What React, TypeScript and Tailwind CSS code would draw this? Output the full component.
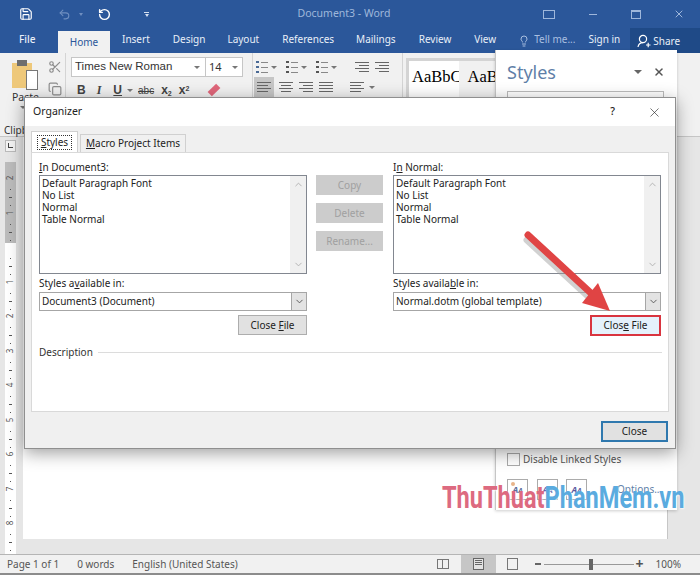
import { ChevronDown, ChevronUp, Copy, Lightbulb, RotateCcw, Save, Scissors, Undo2, X } from "lucide-react";

const tabs = [
  { label: "Insert", cls: "ml-[12px]" },
  { label: "Design", cls: "ml-[23px]" },
  { label: "Layout", cls: "ml-[22px]" },
  { label: "References", cls: "ml-[23px]" },
  { label: "Mailings", cls: "ml-[22px]" },
  { label: "Review", cls: "ml-[23px]" },
  { label: "View", cls: "ml-[23px]" },
];

const styleNames = ["Default Paragraph Font", "No List", "Normal", "Table Normal"];

const Caret = () => <span className="inline-block w-0 h-0 border-x-[3px] border-x-transparent border-t-[3px] border-t-[#777]" />;

const Lines = ({ align = "left" }: { align?: "left" | "center" | "right" | "full" }) => {
  const widths = align === "full" ? ["w-full", "w-full", "w-full", "w-full"] : ["w-full", "w-3/4", "w-full", "w-3/4"];
  const items = align === "left" ? "items-start" : align === "right" ? "items-end" : "items-center";
  return (
    <div className={`flex flex-col gap-[2px] w-[14px] ${items}`}>
      {widths.map((w, i) => (
        <div key={i} className={`${w} h-px bg-[#666]`} />
      ))}
    </div>
  );
};

const ListIcon = ({ kind }: { kind: string }) => (
  <div className="flex items-center gap-[3px]">
    <div className="flex flex-col gap-[3px] w-[12px]">
      {[0, 1, 2].map((i) => (
        <div key={i} className="flex items-center gap-[2px]">
          <span className={`w-[3px] h-[2px] ${kind === "bullet" ? "bg-[#4a6a95]" : "bg-[#555]"}`} />
          <span className="flex-1 h-px bg-[#888]" />
        </div>
      ))}
    </div>
    <Caret />
  </div>
);

const Ruler = () => {
  const marks: string[] = ["2", "1", "", "1", "2", "3", "4", "5", "6", "7", "8"];
  return (
    <div className="w-[11px] flex flex-col">
      <div className="h-[3px]" />
      <div className="h-[12px] bg-[#f4f4f4] border border-[#bbb] flex items-center justify-center">
        <span className="w-[5px] h-[5px] border-l border-b border-[#444]" />
      </div>
      <div className="h-[10px]" />
      <div className="h-[12px] bg-[#bcbcbc]" />
      {marks.map((m, i) => (
        <div key={i} className={`h-[34.6px] flex flex-col items-center text-[8px] leading-none text-[#555] ${i < 2 ? "bg-[#bcbcbc]" : "bg-white"}`}>
          <span className="h-[8px] flex items-center -rotate-90">{m}</span>
          <span className="mt-[7px] w-px h-px bg-[#555]" />
          <span className="mt-[7px] w-[3px] h-px bg-[#555]" />
          <span className="mt-[7px] w-px h-px bg-[#555]" />
        </div>
      ))}
    </div>
  );
};

const ScrollBar = () => (
  <div className="w-[16px] bg-[#f0f0f0] flex flex-col justify-between items-center py-[3px] text-[#b0b0b0]">
    <ChevronUp size={11} />
    <ChevronDown size={11} />
  </div>
);

const ListBox = () => (
  <div className="h-[99px] border border-[#828790] bg-white flex">
    <div className="flex-1 pl-[2px] pt-px">
      {styleNames.map((s) => (
        <div key={s} className="h-[12px] leading-[12px]">{s}</div>
      ))}
    </div>
    <ScrollBar />
  </div>
);

const Combo = ({ value }: { value: string }) => (
  <div className="h-[19px] border border-[#a6a6a6] bg-white flex items-center">
    <span className="flex-1 pl-[2px]">{value}</span>
    <span className="w-[15px] h-full bg-[#e3e3e3] border-l border-[#a6a6a6] flex items-center justify-center text-[#555]">
      <ChevronDown size={11} />
    </span>
  </div>
);

const DisabledButton = ({ label }: { label: string }) => (
  <div className="h-[20px] bg-[#cccccc] text-[#a0a0a0] flex items-center justify-center">{label}</div>
);

const Arrow = () => (
  <svg className="absolute left-[515px] top-[225px]" width="110" height="100" viewBox="0 0 110 100">
    <path d="M14 11 L76 68" stroke="#9a9a9a" strokeOpacity="0.45" strokeWidth="7" strokeLinecap="round" transform="translate(-2 4)" />
    <path d="M13 10 L78 70" stroke="#e04444" strokeWidth="7" strokeLinecap="round" />
    <polygon points="83,58 95,86 67,78" fill="#e04444" />
  </svg>
);

const StyleOptIcon = ({ color, dot }: { color: string; dot?: boolean }) => (
  <div className="relative w-[21px] h-[21px] border border-[#ababab] bg-white flex items-center justify-center text-[9px] italic font-bold" style={{ color }}>
    {dot && <span className="absolute left-[3px] top-[2px] w-[4px] h-[4px] rounded-full bg-[#e8b48a]" />}
    <span>A<span className="text-[7px]">A</span></span>
  </div>
);

export default function App() {
  return (
    <div className="relative w-[700px] h-[575px] overflow-hidden flex flex-col bg-[#e6e6e6] font-['Noto_Sans',sans-serif] text-[10px] text-[#222]">
      {/* Title bar */}
      <div className="h-[28px] bg-[#2b579a] flex items-center text-[#d5e0f0]">
        <Save size={14} className="ml-[19px] text-white" />
        <Undo2 size={13} className="ml-[25px] text-[#6f8fc0]" />
        <span className="ml-[8px] w-0 h-0 border-x-[2px] border-x-transparent border-t-[3px] border-t-[#6f8fc0]" />
        <RotateCcw size={13} strokeWidth={2.6} className="ml-[15px] text-white" />
        <span className="ml-[33px] w-[5px] h-[5px] border-t border-t-[#d5e0f0] flex justify-center pt-px">
          <span className="w-0 h-0 border-x-[2px] border-x-transparent border-t-[3px] border-t-[#d5e0f0]" />
        </span>
        <div className="flex-1 text-center text-[#9fb7db] text-[10.5px] pr-[4px]">Document3 - Word</div>
        <div className="w-[12px] h-[9px] border border-[#9fb7db] mr-[34px]" />
        <div className="w-[8px] h-px bg-[#9fb7db] mr-[34px]" />
        <div className="w-[10px] h-[9px] border border-[#9fb7db] border-t-2 mr-[32px]" />
        <X size={12} className="text-[#9fb7db] mr-[15px]" />
      </div>

      {/* Tabs */}
      <div className="h-[25px] bg-[#2b579a] flex items-end text-[#e9eff8] leading-[23px] whitespace-nowrap">
        <span className="ml-[19px] w-[39px] h-[25px] font-medium">File</span>
        <span className="w-[52px] h-[22px] bg-[#f1f1f1] text-[#2b579a] text-center leading-[22px]">Home</span>
        {tabs.map((t) => (
          <span key={t.label} className={`${t.cls} h-[25px]`}>{t.label}</span>
        ))}
        <Lightbulb size={12} className="ml-[22px] mb-[6px] text-[#a9bfe0]" />
        <span className="ml-[4px] h-[25px] text-[#a9bfe0]">Tell me...</span>
        <span className="ml-[13px] h-[25px]">Sign in</span>
        <span className="ml-[10px] flex-1 h-[25px] bg-[#1f4a87] flex items-center pl-[7px] gap-[2px] leading-none">
          <svg width="14" height="14" viewBox="0 0 14 14" fill="none" stroke="#fff" strokeWidth="1.2">
            <circle cx="6" cy="5" r="3.6" />
            <path d="M1 13c.5-3 2.5-4.4 5-4.4M9 11h4.5M11.2 8.8v4.4" />
          </svg>
          <span>Share</span>
        </span>
      </div>

      {/* Ribbon */}
      <div className="h-[84px] bg-[#f1f1f1] border-b border-[#c6c6c6] flex text-[#333]">
        <div className="w-[66px] relative flex border-r border-[#d4d4d4] pl-[12px] pt-[7px]">
          <div className="flex flex-col items-start">
            <div className="relative w-[26px] h-[30px]">
              <div className="absolute left-0 top-[3px] w-[20px] h-[25px] bg-[#eec87a]" />
              <div className="absolute left-[5px] top-0 w-[10px] h-[6px] bg-[#6e6e6e]" />
              <div className="absolute left-[14px] top-[10px] w-[12px] h-[20px] bg-white border border-[#777]" />
            </div>
            <span className="mt-[1px] text-[10.5px] leading-[12px]">Paste</span>
            <span className="mt-[3px] ml-[8px] flex"><Caret /></span>
          </div>
          <div className="ml-[9px] flex flex-col gap-[8px] text-[#8c8c8c]">
            <Scissors size={14} />
            <Copy size={14} />
          </div>
          <span className="absolute left-[4px] top-[72px] leading-none">Clipboard</span>
        </div>

        <div className="w-[187px] pl-[5px] pt-[4px] border-r border-[#d4d4d4]">
          <div className="h-[20px] w-[172px] flex border border-[#c6c6c6] bg-white items-center">
            <span className="font-['Liberation_Sans',sans-serif] text-[11.5px] pl-[3px] flex-1">Times New Roman</span>
            <Caret />
            <span className="w-px h-full bg-[#c6c6c6] ml-[5px]" />
            <span className="w-[36px] pl-[3px] flex items-center justify-between pr-[4px] text-[11px]"><span>14</span><Caret /></span>
          </div>
          <div className="mt-[3px] flex items-center font-['Liberation_Sans',sans-serif] text-[12px] text-[#444] h-[20px] pl-[6px]">
            <span className="font-bold">B</span>
            <span className="ml-[11px] italic font-bold font-['Liberation_Serif',serif]">I</span>
            <span className="ml-[12px] underline font-bold">U</span>
            <span className="ml-[5px] flex"><Caret /></span>
            <span className="ml-[5px] text-[10px] line-through">abc</span>
            <span className="ml-[7px] font-bold">x<sub className="text-[7px]">2</sub></span>
            <span className="ml-[7px] font-bold">x<sup className="text-[7px]">2</sup></span>
            <span className="ml-[19px] w-[12px] h-[6px] bg-[#e0667a] -rotate-45" />
          </div>
        </div>

        <div className="w-[150px] pl-[2px] pt-[5px] border-r border-[#d4d4d4]">
          <div className="flex gap-[9px] items-center h-[18px] pl-[1px]">
            <ListIcon kind="bullet" />
            <ListIcon kind="number" />
            <ListIcon kind="multi" />
            <div className="ml-[9px] flex gap-[6px]">
              <Lines align="right" />
              <Lines align="right" />
            </div>
          </div>
          <div className="mt-[1px] flex items-center h-[20px] -ml-[1px]">
            <div className="w-[20px] h-[20px] bg-[#c6c6c6] flex items-center justify-center"><Lines /></div>
            <div className="w-[20px] ml-[2px] flex justify-center"><Lines align="center" /></div>
            <div className="w-[20px] flex justify-center"><Lines align="right" /></div>
            <div className="w-[20px] flex justify-center"><Lines align="full" /></div>
            <div className="ml-[14px] flex items-center gap-[5px]"><Lines /><Caret /></div>
          </div>
        </div>

        <div className="flex-1 pl-[3px] pt-[5px]">
          <div className="w-[100px] h-[42px] border-y-[3px] border-l-[3px] border-[#d4d4d4] flex overflow-hidden font-['Liberation_Serif',serif] text-[16.5px] leading-[20px] whitespace-nowrap text-black">
            <div className="w-[60px] bg-white overflow-hidden pl-[3px] pt-[6px]">AaBbCc</div>
            <div className="flex-1 pl-[9px] pt-[6px]">AaBb</div>
          </div>
        </div>
      </div>

      {/* Document area */}
      <div className="flex-1 flex min-h-0">
        <div className="w-[5px]" />
        <Ruler />
        <div className="w-[7px]" />
        <div className="w-[645px] bg-white mb-[15px] border-r border-[#c6c6c6]" />
        <div className="flex-1" />
      </div>

      {/* Status bar */}
      <div className="h-[21px] bg-[#f1f1f1] border-t border-[#b5b5b5] border-b-2 border-b-[#8c8c8c] flex items-center text-[#555]">
        <span className="ml-[7px]">Page 1 of 1</span>
        <span className="ml-[18px]">0 words</span>
        <span className="ml-[18px]">English (United States)</span>
        <div className="flex-1" />
        <div className="w-[12px] h-[10px] border border-[#777] flex">
          <div className="flex-1 border-r border-[#777]" />
          <div className="flex-1" />
        </div>
        <div className="ml-[12px] w-[35px] h-full bg-[#c6c6c6] flex items-center justify-center">
          <div className="w-[11px] h-[12px] border border-[#666] bg-[#e3e3e3] flex flex-col gap-px p-px">
            <div className="h-px bg-[#666]" />
            <div className="h-px bg-[#666]" />
            <div className="h-px bg-[#666]" />
          </div>
        </div>
        <div className="ml-[11px] w-[11px] h-[12px] border border-[#777]" />
        <span className="ml-[17px] w-[6px] h-[2px] bg-[#666]" />
        <div className="ml-[3px] w-[90px] h-px bg-[#999] relative">
          <span className="absolute left-[45px] -top-[5px] w-[4px] h-[11px] bg-[#666]" />
        </div>
        <span className="ml-[2px] text-[14px] leading-none font-bold">+</span>
        <span className="ml-[12px] mr-[19px]">100%</span>
      </div>

      {/* Styles pane */}
      <div className="absolute left-[495px] top-[50px] w-[182px] h-[460px] bg-white border-l border-[#c6c6c6] shadow-[0_1px_3px_rgba(0,0,0,0.2)] pl-[11px] pr-[12px]">
        <div className="flex items-center h-[41px] pt-[3px]">
          <span className="text-[18px] text-[#5f7fa8] flex-1">Styles</span>
          <span className="w-0 h-0 border-x-[4px] border-x-transparent border-t-[4px] border-t-[#666] mr-[11px]" />
          <X size={12} className="text-[#555] stroke-[3]" />
        </div>
        <div className="w-[157px] h-[350px] border border-[#bbb]" />
        <div className="mt-[11px] flex items-center gap-[3px] text-[#555]">
          <span className="w-[13px] h-[13px] border border-[#aaa]" />
          <span>Disable Linked Styles</span>
        </div>
        <div className="mt-[12px] flex items-center">
          <StyleOptIcon color="#5a6c9a" dot />
          <span className="ml-[9px]" />
          <StyleOptIcon color="#5a5aa0" />
          <span className="ml-[8px]" />
          <StyleOptIcon color="#5a5aa0" />
          <span className="ml-[30px] text-[#5f7fa8]">Options...</span>
        </div>
      </div>

      {/* Organizer dialog */}
      <div className="absolute left-[24px] top-[97px] w-[652px] h-[352px] flex flex-col bg-[#f0f0f0] border border-[#8f8f8f] shadow-[0_4px_16px_rgba(0,0,0,0.38)]">
        <div className="h-[28px] bg-white flex items-center pl-[8px] text-[10.5px] text-[#222]">
          <span className="flex-1">Organizer</span>
          <span className="mr-[32px] font-medium">?</span>
          <X size={15} strokeWidth={1} className="mr-[13px]" />
        </div>
        <div className="flex items-end h-[26px] pl-[6px]">
          <div className="w-[47px] h-[21px] bg-white border border-b-0 border-[#d0d0d0] flex items-center justify-center">
            <span className="border border-dotted border-[#333] px-[3px] leading-[13px]"><u>S</u>tyles</span>
          </div>
          <div className="ml-[2px] w-[106px] h-[18px] bg-[#f0f0f0] border border-b-0 border-[#d0d0d0] flex items-center justify-center">
            <span><u>M</u>acro Project Items</span>
          </div>
        </div>
        <div className="relative mx-[6px] h-[260px] bg-white border border-[#d9d9d9] px-[7px] pt-[7px]">
          <div className="grid grid-cols-[268px_86px_268px]">
            <div>
              <div className="h-[15px] leading-[15px]"><u>I</u>n Document3:</div>
              <ListBox />
              <div className="h-[18px] leading-[18px]">Styles a<u>v</u>ailable in:</div>
              <Combo value="Document3 (Document)" />
              <div className="mt-[4px] flex justify-end">
                <div className="w-[69px] h-[20px] bg-[#e1e1e1] border border-[#adadad] flex items-center justify-center">
                  <span>Close <u>F</u>ile</span>
                </div>
              </div>
            </div>
            <div className="ml-[9px] w-[67px] pt-[15px] flex flex-col gap-[8px]">
              <DisabledButton label="Copy" />
              <DisabledButton label="Delete" />
              <DisabledButton label="Rename..." />
            </div>
            <div>
              <div className="h-[15px] leading-[15px]">I<u>n</u> Normal:</div>
              <ListBox />
              <div className="h-[18px] leading-[18px]">Styles availa<u>b</u>le in:</div>
              <Combo value="Normal.dotm (global template)" />
              <div className="mt-[4px] flex justify-end">
                <div className="w-[71px] h-[21px] bg-[#e5f1fb] border-[2px] border-[#d9343f] flex items-center justify-center">
                  <span>Clos<u>e</u> File</span>
                </div>
              </div>
            </div>
          </div>
          <div className="mt-[9px] flex items-center gap-[5px]">
            <span className="text-[#333]">Description</span>
            <span className="flex-1 h-px bg-[#dcdcdc] mr-[-1px]" />
          </div>
        </div>
        <div className="flex-1 flex justify-end items-center pr-[7px] pt-[3px]">
          <div className="w-[67px] h-[21px] bg-[#e1e1e1] border-2 border-[#2f78ae] flex items-center justify-center">Close</div>
        </div>
      </div>

      <Arrow />

      {/* Watermark */}
      <div className="absolute left-[442px] top-[480px] origin-left scale-x-[0.76] font-['Roboto',sans-serif] font-bold text-[31px] leading-[36px] whitespace-nowrap [text-shadow:1px_1px_2px_rgba(255,255,255,0.8)]">
        <span className="text-[#dd6a80]">ThuThuat</span>
        <span className="text-[#5aabdf]">PhanMem.vn</span>
      </div>
    </div>
  );
}
